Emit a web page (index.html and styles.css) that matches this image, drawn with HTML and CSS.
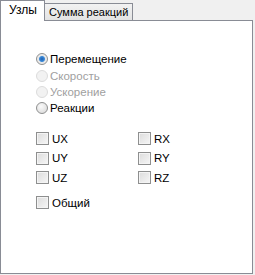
FILE: index.html
```
<!DOCTYPE html>
<html>
<head>
    <meta name="viewport" content="width=device-width, initial-scale=1.0">
    <title>Узлы</title>
    <link rel="stylesheet" href="styles.css">
</head>
<body>
    <div class="tabs">
        <div class="tab active">Узлы</div>
        <div class="tab">Сумма реакций</div>
    </div>

    <div class="panel">
        <div class="radios">
            <label class="opt"><span class="radio checked"></span>Перемещение</label>
            <label class="opt disabled"><span class="radio"></span>Скорость</label>
            <label class="opt disabled"><span class="radio"></span>Ускорение</label>
            <label class="opt"><span class="radio"></span>Реакции</label>
        </div>

        <div class="checks">
            <label class="opt"><span class="box"></span>UX</label>
            <label class="opt"><span class="box"></span>RX</label>
            <label class="opt"><span class="box"></span>UY</label>
            <label class="opt"><span class="box"></span>RY</label>
            <label class="opt"><span class="box"></span>UZ</label>
            <label class="opt"><span class="box"></span>RZ</label>
        </div>

        <label class="opt total"><span class="box"></span>Общий</label>
    </div>
</body>
</html>
```

FILE: styles.css
```
body {
    margin: 0;
    background-color: #f0f0f0;
    font-family: "Liberation Sans", Arial, sans-serif;
    font-size: 11.5px;
    color: #000;
}
.tabs {
    display: flex;
    align-items: flex-end;
    height: 20px;
}
.tab {
    box-sizing: border-box;
    height: 17px;
    padding: 2px 4px 0 4px;
    border: 1px solid #898c95;
    border-bottom: none;
    background: linear-gradient(#f2f2f2, #e3e3e3);
    white-space: nowrap;
    font-size: 11px;
}
.tab.active {
    position: relative;
    z-index: 1;
    height: 21px;
    margin-bottom: -1px;
    width: 45px;
    padding: 2px 0 0 8px;
    background: #fff;
    font-size: 12px;
}
.tab + .tab {
    margin-left: -1px;
    width: 89px;
    padding-left: 4px;
}
.panel {
    box-sizing: border-box;
    width: 253px;
    height: 254px;
    border: 1px solid #898c95;
    background-color: #fff;
    padding: 30px 0 0 35px;
}
.opt {
    display: flex;
    align-items: center;
    gap: 2px;
    height: 16px;
}
.radios .opt {
    height: 16.4px;
}
.opt.disabled {
    color: #a0a0a0;
}
.radio {
    box-sizing: border-box;
    width: 12px;
    height: 12px;
    border-radius: 50%;
    border: 1px solid #8e8f8f;
    background: radial-gradient(circle at 40% 35%, #fafafa, #d6d6d6);
}
.opt.disabled .radio {
    border-color: #dcdcdc;
    background: #f2f2f2;
}
.radio.checked {
    background: radial-gradient(circle, #1f5fb0 0, #3b8ad8 2.5px, #e6e6e6 3.5px, #f4f4f4 6px);
}
.checks {
    display: grid;
    grid-template-columns: 102px auto;
    row-gap: 3.5px;
    margin-top: 14px;
}
.box {
    box-sizing: border-box;
    width: 13px;
    height: 13px;
    border: 1px solid #8e8f8f;
    background: linear-gradient(135deg, #dcdcdc, #f6f6f6);
    box-shadow: inset 0 0 0 1px #f4f4f4;
    margin-right: 1px;
}
.total {
    margin-top: 9px;
}
```
